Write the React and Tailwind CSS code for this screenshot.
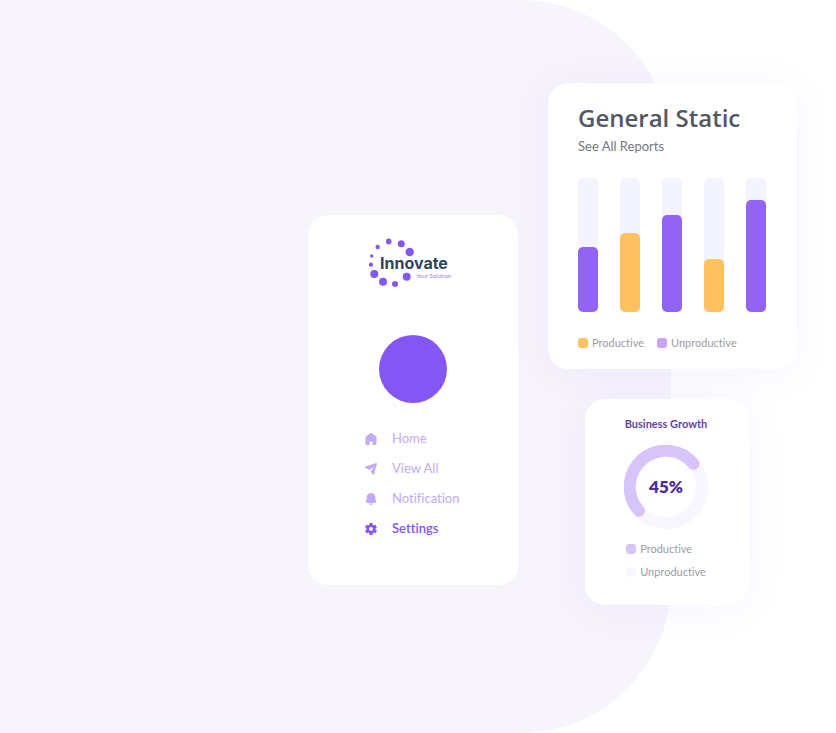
const bars = [
  { id: 'b1', value: 48.2, kind: 'unproductive' },
  { id: 'b2', value: 59.2, kind: 'productive' },
  { id: 'b3', value: 72.2, kind: 'unproductive' },
  { id: 'b4', value: 39.8, kind: 'productive' },
  { id: 'b5', value: 83.4, kind: 'unproductive' },
];

function Logo() {
  return (
    <svg viewBox="0 0 90 50" className="h-[50px] w-[90px]" role="img" aria-label="Innovate, Your Solution">
      <g fill="#8456f4">
        <circle cx="20.7" cy="3.4" r="2.8" />
        <circle cx="9.7" cy="9" r="2.2" />
        <circle cx="3.7" cy="18" r="1.7" />
        <circle cx="3" cy="26.7" r="2.1" />
        <circle cx="6.3" cy="36" r="4" />
        <circle cx="15" cy="43.7" r="4" />
        <circle cx="27" cy="46" r="3" />
        <circle cx="38.7" cy="38.7" r="4" />
        <circle cx="41.7" cy="14" r="4.2" />
        <circle cx="33.3" cy="5.8" r="3.5" />
      </g>
      <text x="12" y="31" fontSize="16" fill="#2f4659" className="font-[Inter,sans-serif] font-bold">Innovate</text>
      <text x="48" y="40" fontSize="6" fill="#a47bf8" className="font-[Lato,sans-serif]">Your Solution</text>
    </svg>
  );
}

function HomeIcon() {
  return (
    <svg viewBox="0 0 12 12" className="size-3" fill="currentColor" aria-hidden="true">
      <path d="M5 .4a1.6 1.6 0 0 1 2 0l3.900 2.900c.4.300.600.800.600 1.300v5.800c0 .9-.7 1.600-1.600 1.600H7.700V9.600c0-.8-.7-1.400-1.600-1.400s-1.700.6-1.700 1.400V12H2.100C1.200 12 .5 11.300.5 10.400V4.600c0-.5.2-1 .6-1.300z" />
    </svg>
  );
}

function SendIcon() {
  return (
    <svg viewBox="0 0 12 12" className="size-3" fill="currentColor" aria-hidden="true">
      <path d="M.5 3.400 11 .1c.6-.2 1.100.3.9.9L9 11.200c-.2.700-1 .8-1.400.2L5.700 8.500 8.500 4.700c.3-.4-.1-.8-.5-.5L4.200 7 .3 4.800C-.2 4.500-.1 3.600.5 3.400z" />
    </svg>
  );
}

function BellIcon() {
  return (
    <svg viewBox="0 0 12 12" className="size-3" fill="currentColor" aria-hidden="true">
      <path d="M6 0C3.400 0 1.700 1.900 1.700 4.100v1.600c0 .5-.2.900-.5 1.300-.9 1.100-.6 2.400.6 2.700 2.600.6 5.800.6 8.400 0 1.200-.3 1.500-1.600.6-2.700-.3-.4-.5-.8-.5-1.300V4.100C10.300 1.900 8.600 0 6 0z" />
      <path d="M4.200 10.500c1.200.2 2.400.2 3.600 0-.3.900-.9 1.500-1.800 1.500s-1.500-.6-1.800-1.500z" />
    </svg>
  );
}

function GearIcon() {
  return (
    <svg viewBox="2 2 20 20" className="size-3" fill="currentColor" aria-hidden="true">
      <path fillRule="evenodd" d="M19.430 12.980c.04-.32.07-.64.07-.98s-.03-.66-.07-.98l2.110-1.650c.19-.15.24-.42.12-.64l-2-3.460c-.12-.22-.39-.3-.61-.22l-2.490 1c-.52-.4-1.080-.73-1.690-.98l-.38-2.650C14.460 2.180 14.250 2 14 2h-4c-.25 0-.46.180-.49.420l-.38 2.650c-.61.25-1.170.59-1.690.98l-2.490-1c-.23-.09-.49 0-.61.22l-2 3.460c-.13.22-.07.49.12.64l2.110 1.650c-.04.32-.07.65-.07.98s.03.66.07.98l-2.110 1.650c-.19.15-.24.42-.12.64l2 3.460c.12.22.39.3.61.22l2.490-1c.52.4 1.080.73 1.690.98l.38 2.650c.03.24.24.42.49.42h4c.25 0 .46-.18.49-.42l.38-2.650c.61-.25 1.170-.59 1.690-.98l2.490 1c.23.09.49 0 .61-.22l2-3.460c.12-.22.07-.49-.12-.64l-2.110-1.650zM12 15.200a3.200 3.200 0 1 1 0-6.400 3.200 3.200 0 0 1 0 6.400z" />
    </svg>
  );
}

const links = [
  { label: 'Home', Icon: HomeIcon },
  { label: 'View All', Icon: SendIcon },
  { label: 'Notification', Icon: BellIcon },
  { label: 'Settings', Icon: GearIcon, active: true },
];

function Legend({ color, children }) {
  return (
    <li className="flex items-center gap-1">
      <span className={`size-[10px] rounded-[3px] ${color}`} />
      {children}
    </li>
  );
}

function Sidebar() {
  return (
    <aside className="mt-[215px] flex w-[210px] shrink-0 flex-col items-center rounded-[20px] bg-white pt-[23px] pb-[41px]">
      <Logo />
      <div className="mt-[47px] size-[68px] rounded-full bg-[#8456f4]" />
      <nav className="mt-[21px] w-full pl-[57px]">
        <ul>
          {links.map(({ label, Icon, active }) => (
            <li key={label}>
              <a
                href="#"
                aria-current={active ? 'page' : undefined}
                className={`flex h-[30px] items-center gap-[15px] text-[13px] ${active ? 'font-semibold text-[#8456f4]' : 'text-[#c2a9fa]'}`}
              >
                <Icon />
                {label}
              </a>
            </li>
          ))}
        </ul>
      </nav>
    </aside>
  );
}

function GeneralStatic() {
  return (
    <section className="rounded-[20px] bg-white px-[30px] pt-[19px] pb-4 shadow-[0_4px_40px_rgba(132,86,244,0.07)]">
      <h1 className="font-['Open_Sans',sans-serif] text-2xl leading-8 font-semibold text-[#525863]">General Static</h1>
      <p className="text-[13px] leading-6 text-[#737983]">See All Reports</p>
      <div className="mt-5 flex h-[134px] justify-between">
        {bars.map((bar) => (
          <div key={bar.id} className="flex w-5 flex-col justify-end rounded-[5px] bg-[#f4f4ff]">
            <div
              className={`rounded-[5px] ${bar.kind === 'productive' ? 'bg-[#ffc25f]' : 'bg-[#9164f6]'}`}
              style={{ height: `${bar.value}%` }}
            />
          </div>
        ))}
      </div>
      <ul className="mt-[21px] flex gap-[13px] text-[11px] leading-5 text-[#9a9ca3]">
        <Legend color="bg-[#ffc25f]">Productive</Legend>
        <Legend color="bg-[#c9a2fc]">Unproductive</Legend>
      </ul>
    </section>
  );
}

function BusinessGrowth() {
  return (
    <section className="ml-[37px] flex w-[164px] flex-col items-center rounded-[20px] bg-white pt-[15px] pr-[2px] pb-[23px] shadow-[0_4px_40px_rgba(132,86,244,0.07)]">
      <h2 className="text-[11px] leading-5 font-bold text-[#623fae]">Business Growth</h2>
      <div className="mt-[11px] grid size-[84px] place-items-center">
        <svg viewBox="0 0 84 84" className="col-start-1 row-start-1 size-[84px]" fill="none" strokeWidth="12" aria-hidden="true">
          <circle cx="42" cy="42" r="36" stroke="#f8f6fe" />
          <path d="M15 65.800A36 36 0 1 1 69.600 18.900" stroke="#d6c4fb" strokeLinecap="round" />
        </svg>
        <p className="col-start-1 row-start-1 text-[17px] leading-5 font-extrabold text-[#4f2d9a]">45%</p>
      </div>
      <ul className="mt-[10px] flex flex-col gap-[3px] text-[11px] leading-5 text-[#9a9ca3]">
        <Legend color="bg-[#d6c4fb]">Productive</Legend>
        <Legend color="bg-[#f8f6fe]">Unproductive</Legend>
      </ul>
    </section>
  );
}

export default function App() {
  return (
    <main className="grid min-h-screen overflow-hidden bg-white font-[Lato,sans-serif] [font-variant-ligatures:none]">
      <div className="col-start-1 row-start-1 mr-[165px] rounded-r-[150px] bg-[#f7f4fc]" />
      <div className="col-start-1 row-start-1 flex items-start justify-end gap-[30px] pr-10 pb-16">
        <Sidebar />
        <div className="mt-[83px] flex w-[248px] shrink-0 flex-col gap-[30px]">
          <GeneralStatic />
          <BusinessGrowth />
        </div>
      </div>
    </main>
  );
}
